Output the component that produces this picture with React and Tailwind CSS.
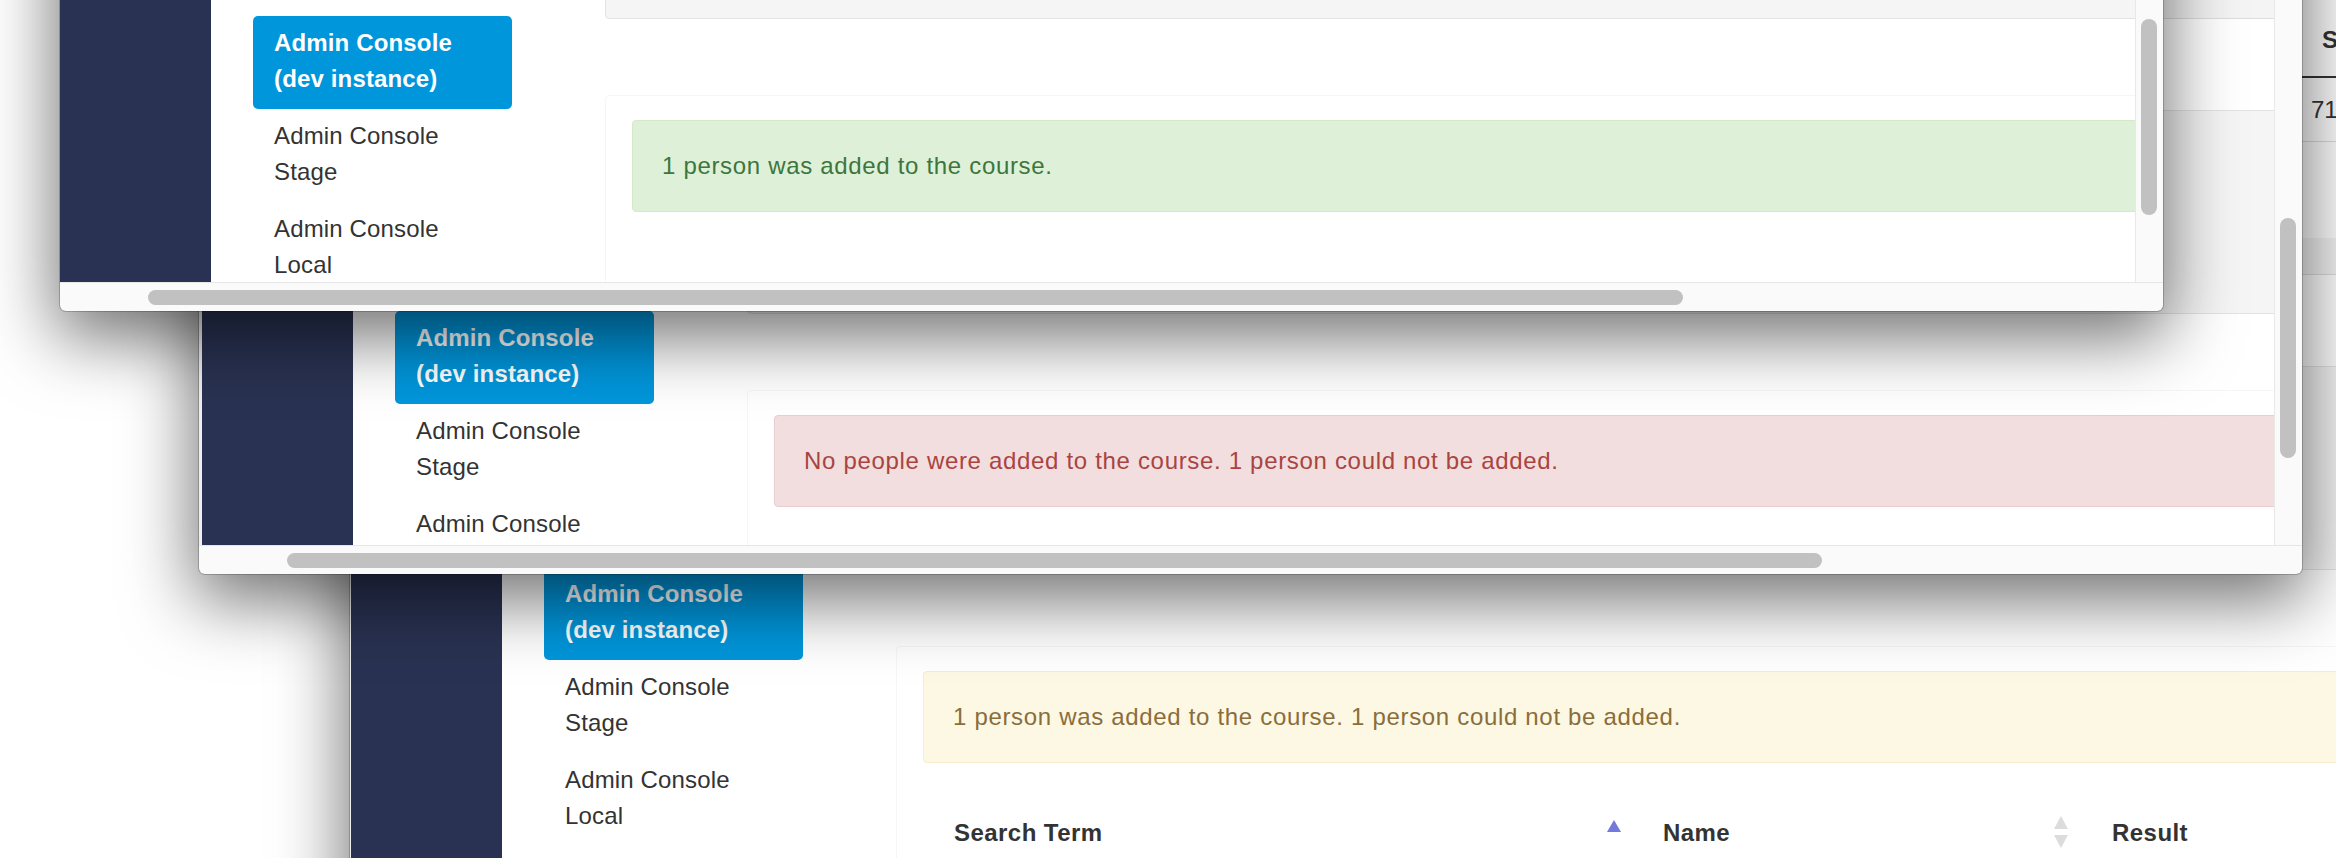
const ALERTS = {
  success: {
    box: "bg-[#dff0d8] border-[#d6e9c6] text-[#3c763d]",
    text: "1 person was added to the course.",
  },
  danger: {
    box: "bg-[#f2dede] border-[#ebccd1] text-[#a94442]",
    text: "No people were added to the course. 1 person could not be added.",
  },
  warning: {
    box: "bg-[#fcf8e3] border-[#faebcc] text-[#8a6d3b]",
    text: "1 person was added to the course. 1 person could not be added.",
  },
};

function SortIcon({ active }) {
  return (
    <svg width="14" height="36" viewBox="0 0 14 36" className="shrink-0">
      {active ? (
        <polygon points="0,17 7,5 14,17" fill="#7479dc" />
      ) : (
        <>
          <polygon points="0,14 7,1 14,14" fill="#dcdcdc" />
          <polygon points="0,20 7,33 14,20" fill="#dcdcdc" />
        </>
      )}
    </svg>
  );
}

function NavItem({ active, children }) {
  return (
    <div
      className={`w-[259px] rounded-[5px] pl-[21px] pt-[9px] pb-[12px] tracking-[0.15px] ${
        active ? "bg-[#0096db] font-bold text-white" : "text-[#333333]"
      }`}
    >
      {children}
    </div>
  );
}

function Main({ variant, showTable }) {
  const alert = ALERTS[variant];
  return (
    <main className="w-[1800px] shrink-0 flex flex-col">
      {/* older results table, mostly scrolled away */}
      <div className="flex h-[127px] border-b-2 border-[#333333] pt-[71px]">
        <div className="w-[1426px] shrink-0" />
        <div className="font-bold text-[#333333]">SIS ID</div>
      </div>
      <div className="flex h-[64px] border-b border-[#dddddd] pt-[14px]">
        <div className="w-[1415px] shrink-0" />
        <div className="text-[#333333]">7154021</div>
      </div>
      <div className="h-[96px]" />
      <div className="h-[37px] bg-[#f4f4f4] border-b border-[#dddddd]" />
      <div className="h-[91px]" />

      {/* form well */}
      <div className="h-[204px] rounded-[4px] border border-[#e3e3e3] bg-[#f5f5f5]" />

      {/* results panel */}
      <div className="mt-[76px] rounded-[4px] border border-[#f6f6f6] pt-[24px] pl-[26px] pb-[200px]">
        <div className={`w-[1700px] rounded-[4px] border px-[29px] py-[27px] tracking-[0.68px] ${alert.box}`}>
          {alert.text}
        </div>
        {showTable && (
          <div className="mt-[52px] flex font-bold text-[#333333] tracking-[0.45px]">
            <div className="w-[711px] shrink-0 flex justify-between pl-[31px] pr-[13px]">
              <span>Search Term</span>
              <SortIcon active />
            </div>
            <div className="w-[450px] shrink-0 flex justify-between pl-[29px] pr-[16px]">
              <span>Name</span>
              <SortIcon />
            </div>
            <div className="pl-[28px]">Result</div>
          </div>
        )}
      </div>
    </main>
  );
}

function AppWindow({ frame, scroll, edge, variant, showTable, vThumb }) {
  return (
    <div
      className={`absolute w-[2103px] flex flex-col overflow-hidden rounded-b-[6px] bg-[#fafafa] shadow-[0_0_0_1px_rgba(0,0,0,0.2),0_22px_70px_4px_rgba(0,0,0,0.56)] ${frame}`}
    >
      <div className="flex flex-1 min-h-0">
        <div className={`flex-1 min-w-0 overflow-hidden bg-white ${edge}`}>
          <div className={`flex w-max min-h-[1800px] text-[24px] leading-[36px] ${scroll}`}>
            <aside className="w-[151px] shrink-0 bg-[#293252]" />
            <nav className="w-[394px] shrink-0 pt-[616px] pl-[42px]">
              <NavItem active>
                Admin Console
                <br />
                (dev instance)
              </NavItem>
              <NavItem>
                Admin Console
                <br />
                Stage
              </NavItem>
              <NavItem>
                Admin Console
                <br />
                Local
              </NavItem>
            </nav>
            <Main variant={variant} showTable={showTable} />
          </div>
        </div>
        <div className="w-[28px] shrink-0 border-l border-[#e8e8e8] bg-[#fafafa] pl-[5px]">
          {vThumb}
        </div>
      </div>
      <div className="h-[29px] shrink-0 border-t border-[#e6e6e6] pt-[7px] pl-[88px]">
        <div className="h-[15px] w-[1535px] rounded-full bg-[#c1c1c1]" />
      </div>
    </div>
  );
}

export default function App() {
  return (
    <div className="relative w-[2336px] h-[858px] overflow-hidden bg-white font-['Liberation_Sans',Arial,sans-serif]">
      <AppWindow
        frame="left-[350px] top-[-100px] h-[1100px] z-10"
        scroll="mt-[51px]"
        edge="border-l border-[#eeeeee]"
        variant="warning"
        showTable
        vThumb={<div className="mt-[700px] h-[200px] w-[16px] rounded-full bg-[#c1c1c1]" />}
      />
      <AppWindow
        frame="left-[199px] top-[-137px] h-[711px] z-20"
        scroll="-mt-[168px]"
        edge="border-l-[3px] border-[#eeeeee]"
        variant="danger"
        vThumb={<div className="mt-[355px] h-[240px] w-[16px] rounded-full bg-[#c1c1c1]" />}
      />
      <AppWindow
        frame="left-[60px] top-[-400px] h-[711px] z-30"
        scroll="-mt-[200px]"
        edge=""
        variant="success"
        vThumb={<div className="mt-[419px] h-[196px] w-[16px] rounded-full bg-[#c1c1c1]" />}
      />
    </div>
  );
}
